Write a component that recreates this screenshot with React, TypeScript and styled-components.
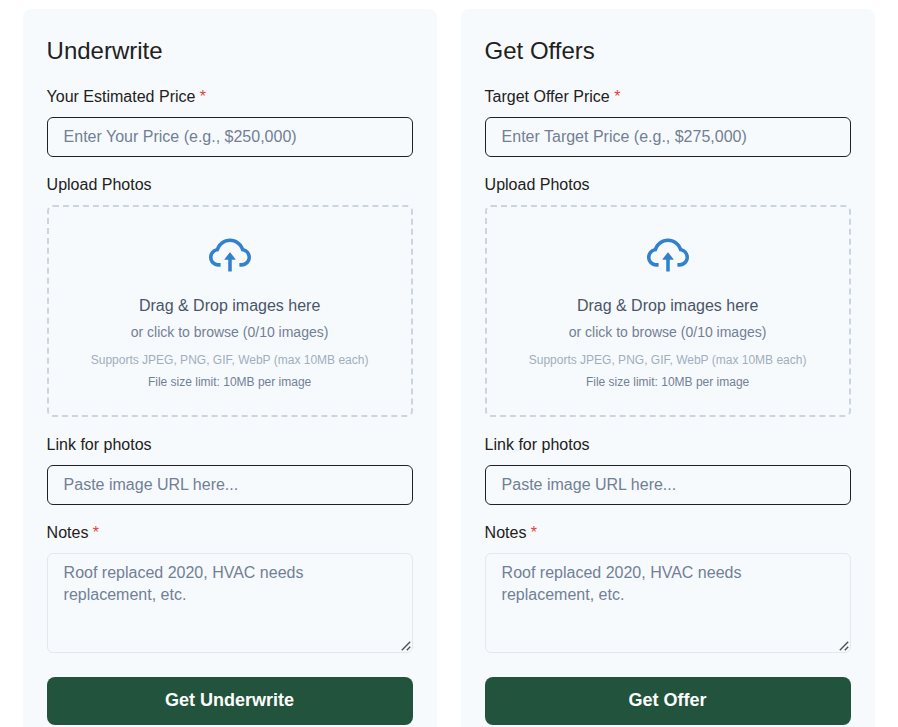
import React from "react";
import styled, { createGlobalStyle } from "styled-components";
import { AiOutlineCloudUpload } from "react-icons/ai";

const GlobalStyle = createGlobalStyle`
  *, *::before, *::after { box-sizing: border-box; }
  html, body { margin: 0; padding: 0; background: #fff; overflow: hidden; }
  body { font-family: "Liberation Sans", Arial, sans-serif; color: #212121; font-size: 16px; line-height: 24px; }
`;
const Page = styled.main`
  display: grid;
  grid-template-columns: 414px 414px;
  gap: 24px;
  height: 727px;
  padding: 9px 0 0 22.6px;
  overflow: hidden;
`;
const Card = styled.section`
  display: flex;
  flex-direction: column;
  height: 740px;
  padding: 24px;
  background: #f7fafc;
  border-radius: 8px;
`;
const Title = styled.h2`
  margin: 0 0 16px;
  font-size: 24px;
  line-height: 36px;
  font-weight: 400;
`;
const Label = styled.label`
  display: block;
  margin-bottom: 8px;
  line-height: 24px;
`;
const Required = styled.span`
  color: #e53e3e;
`;
const Input = styled.input`
  display: block;
  width: 100%;
  height: 40px;
  margin: 0 0 16px;
  padding: 0 16px;
  border: 1px solid #212121;
  border-radius: 6px;
  background: transparent;
  font: inherit;
  &::placeholder { color: #718096; opacity: 1; }
`;
const NotesWrap = styled.div`
  position: relative;
  height: 100px;
  margin-bottom: 24px;
`;
const Notes = styled.textarea`
  display: block;
  width: 100%;
  height: 100px;
  margin: 0;
  padding: 8px 16px;
  border: 1px solid #e2e8f0;
  border-radius: 6px;
  background: transparent;
  font: inherit;
  line-height: 22px;
  resize: none;
  &::placeholder { color: #718096; opacity: 1; }
`;
const Grip = styled.svg`
  position: absolute;
  right: 2px;
  bottom: 2px;
  width: 10px;
  height: 10px;
  pointer-events: none;
`;
const DropZone = styled.div`
  display: flex;
  flex-direction: column;
  align-items: center;
  height: 212px;
  margin-bottom: 16px;
  padding-top: 24px;
  border: 2px dashed #cbd5e0;
  border-radius: 6px;
`;
const CloudIcon = styled(AiOutlineCloudUpload)`
  width: 48px;
  height: 48px;
  margin-bottom: 15px;
  color: #3182ce;
`;
const DropText = styled.p<{ $size: number; $line: number; $color: string; $gap: number }>`
  margin: 0 0 ${p => p.$gap}px;
  font-size: ${p => p.$size}px;
  line-height: ${p => p.$line}px;
  color: ${p => p.$color};
`;
const Submit = styled.button`
  height: 48px;
  flex: none;
  padding: 0 0 2px;
  border: 0;
  border-radius: 8px;
  background: #22543d;
  color: #fff;
  font: bold 18px/27px "Liberation Sans", Arial, sans-serif;
`;

interface OfferFormProps { title: string; priceLabel: string; pricePlaceholder: string; action: string }

function OfferForm({ title, priceLabel, pricePlaceholder, action }: OfferFormProps) {
  return (
    <Card>
      <Title>{title}</Title>
      <Label>{priceLabel} <Required>*</Required></Label>
      <Input placeholder={pricePlaceholder} />
      <Label>Upload Photos</Label>
      <DropZone>
        <CloudIcon />
        <DropText $size={16} $line={24} $color="#4a5568" $gap={4}>Drag &amp; Drop images here</DropText>
        <DropText $size={14} $line={21} $color="#718096" $gap={8}>or click to browse (0/10 images)</DropText>
        <DropText $size={12} $line={18} $color="#a0aec0" $gap={4}>Supports JPEG, PNG, GIF, WebP (max 10MB each)</DropText>
        <DropText $size={12} $line={18} $color="#718096" $gap={0}>File size limit: 10MB per image</DropText>
      </DropZone>
      <Label>Link for photos</Label>
      <Input placeholder="Paste image URL here..." />
      <Label>Notes <Required>*</Required></Label>
      <NotesWrap>
        <Notes placeholder="Roof replaced 2020, HVAC needs replacement, etc." />
        <Grip viewBox="0 0 10 10" fill="none" stroke="#505050" strokeWidth="1.4">
          <path d="M0.8 9.2 9.2 0.8M5.8 9.2 9.2 5.8" />
        </Grip>
      </NotesWrap>
      <Submit>{action}</Submit>
    </Card>
  );
}

export default function App() {
  return (
    <>
      <GlobalStyle />
      <Page>
        <OfferForm title="Underwrite" priceLabel="Your Estimated Price" pricePlaceholder="Enter Your Price (e.g., $250,000)" action="Get Underwrite" />
        <OfferForm title="Get Offers" priceLabel="Target Offer Price" pricePlaceholder="Enter Target Price (e.g., $275,000)" action="Get Offer" />
      </Page>
    </>
  );
}
